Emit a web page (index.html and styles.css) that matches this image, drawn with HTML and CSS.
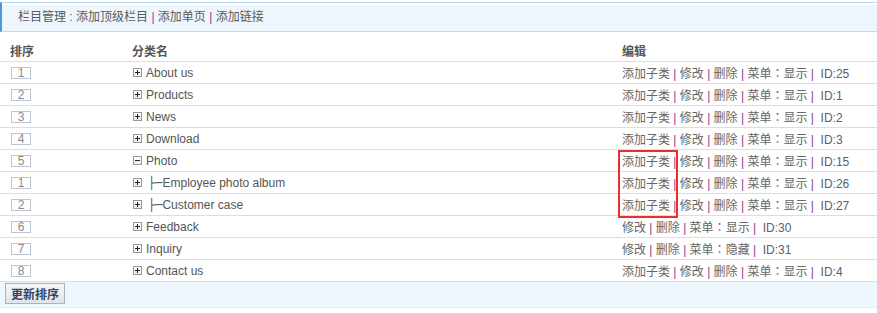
FILE: index.html
```html
<!DOCTYPE html>
<html lang="zh-CN">
<head>
<meta charset="utf-8">
<title>栏目管理</title>
<link rel="stylesheet" href="styles.css">
</head>
<body>
<div class="page">
  <div class="topbar">栏目管理 : <a>添加顶级栏目</a> <span class="sep">|</span> <a>添加单页</a> <span class="sep">|</span> <a>添加链接</a></div>
  <table class="grid">
    <thead>
      <tr><th class="c1">排序</th><th class="c2">分类名</th><th class="c3">编辑</th></tr>
    </thead>
    <tbody>
      <tr><td class="c1"><span class="num">1</span></td><td class="c2"><span class="ico plus"></span>About us</td><td class="c3">添加子类 <span class="sep">|</span> 修改 <span class="sep">|</span> 删除 <span class="sep">|</span> 菜单<span class="colon" lang="zh-TW">：</span>显示 <span class="sep">|</span>&nbsp; <span class="id">ID:25</span></td></tr>
      <tr><td class="c1"><span class="num">2</span></td><td class="c2"><span class="ico plus"></span>Products</td><td class="c3">添加子类 <span class="sep">|</span> 修改 <span class="sep">|</span> 删除 <span class="sep">|</span> 菜单<span class="colon" lang="zh-TW">：</span>显示 <span class="sep">|</span>&nbsp; <span class="id">ID:1</span></td></tr>
      <tr><td class="c1"><span class="num">3</span></td><td class="c2"><span class="ico plus"></span>News</td><td class="c3">添加子类 <span class="sep">|</span> 修改 <span class="sep">|</span> 删除 <span class="sep">|</span> 菜单<span class="colon" lang="zh-TW">：</span>显示 <span class="sep">|</span>&nbsp; <span class="id">ID:2</span></td></tr>
      <tr><td class="c1"><span class="num">4</span></td><td class="c2"><span class="ico plus"></span>Download</td><td class="c3">添加子类 <span class="sep">|</span> 修改 <span class="sep">|</span> 删除 <span class="sep">|</span> 菜单<span class="colon" lang="zh-TW">：</span>显示 <span class="sep">|</span>&nbsp; <span class="id">ID:3</span></td></tr>
      <tr><td class="c1"><span class="num">5</span></td><td class="c2"><span class="ico minus"></span>Photo</td><td class="c3">添加子类 <span class="sep">|</span> 修改 <span class="sep">|</span> 删除 <span class="sep">|</span> 菜单<span class="colon" lang="zh-TW">：</span>显示 <span class="sep">|</span>&nbsp; <span class="id">ID:15</span></td></tr>
      <tr><td class="c1"><span class="num">1</span></td><td class="c2"><span class="ico plus"></span><span class="tree">├─</span>Employee photo album</td><td class="c3">添加子类 <span class="sep">|</span> 修改 <span class="sep">|</span> 删除 <span class="sep">|</span> 菜单<span class="colon" lang="zh-TW">：</span>显示 <span class="sep">|</span>&nbsp; <span class="id">ID:26</span></td></tr>
      <tr><td class="c1"><span class="num">2</span></td><td class="c2"><span class="ico plus"></span><span class="tree">├─</span>Customer case</td><td class="c3">添加子类 <span class="sep">|</span> 修改 <span class="sep">|</span> 删除 <span class="sep">|</span> 菜单<span class="colon" lang="zh-TW">：</span>显示 <span class="sep">|</span>&nbsp; <span class="id">ID:27</span></td></tr>
      <tr><td class="c1"><span class="num">6</span></td><td class="c2"><span class="ico plus"></span>Feedback</td><td class="c3">修改 <span class="sep">|</span> 删除 <span class="sep">|</span> 菜单<span class="colon" lang="zh-TW">：</span>显示 <span class="sep">|</span>&nbsp; <span class="id">ID:30</span></td></tr>
      <tr><td class="c1"><span class="num">7</span></td><td class="c2"><span class="ico plus"></span>Inquiry</td><td class="c3">修改 <span class="sep">|</span> 删除 <span class="sep">|</span> 菜单<span class="colon" lang="zh-TW">：</span>隐藏 <span class="sep">|</span>&nbsp; <span class="id">ID:31</span></td></tr>
      <tr><td class="c1"><span class="num">8</span></td><td class="c2"><span class="ico plus"></span>Contact us</td><td class="c3">添加子类 <span class="sep">|</span> 修改 <span class="sep">|</span> 删除 <span class="sep">|</span> 菜单<span class="colon" lang="zh-TW">：</span>显示 <span class="sep">|</span>&nbsp; <span class="id">ID:4</span></td></tr>
    </tbody>
  </table>
  <div class="footer"><button class="btn">更新排序</button></div>
  <div class="highlight"></div>
</div>
</body>
</html>
```
FILE: styles.css
```css
html, body {
  margin: 0;
  padding: 0;
  background: #fff;
}
body {
  font-family: "Liberation Sans", Arial, "Noto Sans CJK SC", sans-serif;
  font-size: 12px;
  color: #555;
}
.page {
  position: relative;
  width: 877px;
  height: 313px;
  overflow: hidden;
}
.topbar {
  height: 28px;
  line-height: 28px;
  padding-left: 16px;
  border-top: 1px solid #b9d7f0;
  box-shadow: inset 0 2px 0 #fff;
  border-bottom: 1px solid #c9d7e3;
  border-left: 2px solid #4d94d8;
  background: #eef6fd;
  margin-top: 2px;
  color: #5a5a5a;
}
.topbar a { color: #5a5a5a; }
.sep { color: #8a3d8f; }
.colon { font-family: "Noto Sans CJK TC", sans-serif; }
.grid {
  border-collapse: collapse;
  width: 877px;
  margin-top: 8px;
  table-layout: fixed;
}
.grid th, .grid td {
  height: 21px;
  padding: 0;
  border-bottom: 1px solid #d3e0ec;
  text-align: left;
  white-space: nowrap;
  vertical-align: middle;
}
.grid th {
  font-weight: bold;
  color: #555;
  font-family: "Noto Sans CJK SC", sans-serif;
  font-size: 12px;
  line-height: 21px;
}
.c1 { width: 125px; box-sizing: border-box; }
.grid th.c1 { padding-left: 10px; }
.grid td.c1 { padding-left: 11px; }
.c2 { width: 490px; }
.grid th.c2 { padding-left: 7px; }
.grid td.c2 { padding-left: 8px; }
.grid td.c3 {
  color: #666;
}
.num {
  display: inline-block;
  width: 18px;
  height: 10px;
  line-height: 11px;
  border: 1px solid #b8c6d4;
  text-align: center;
  color: #8a8a8a;
  font-size: 12px;
  vertical-align: middle;
}
.ico {
  display: inline-block;
  width: 7px;
  height: 7px;
  border: 1px solid #999;
  background: linear-gradient(#fff, #ececec);
  position: relative;
  margin-right: 4px;
  vertical-align: middle;
  top: -1px;
}
.ico::before {
  content: "";
  position: absolute;
  left: 1px;
  top: 3px;
  width: 5px;
  height: 1px;
  background: #222;
}
.ico.plus::after {
  content: "";
  position: absolute;
  left: 3px;
  top: 1px;
  width: 1px;
  height: 5px;
  background: #222;
}
.tree {
  font-family: "DejaVu Sans", sans-serif;
  font-size: 12px;
  margin-left: 2px;
  color: #555;
}
.id { color: #55607a; }
.footer {
  height: 25px;
  background: #eef7fd;
  border-bottom: 1px solid #e2ecf4;
  padding: 0 0 0 5px;
}
.btn {
  height: 21px;
  padding: 0 5px;
  margin: 1px 0 0 0;
  font-family: "Noto Sans CJK SC", sans-serif;
  font-size: 12px;
  font-weight: bold;
  color: #334466;
  border: 1px solid #a4b4c4;
  background: linear-gradient(#f4f6f8, #dfe4ea);
  line-height: 19px;
}
.highlight {
  position: absolute;
  left: 618px;
  top: 150px;
  width: 56px;
  height: 64px;
  border: 2px solid #e8312f;
}
```
